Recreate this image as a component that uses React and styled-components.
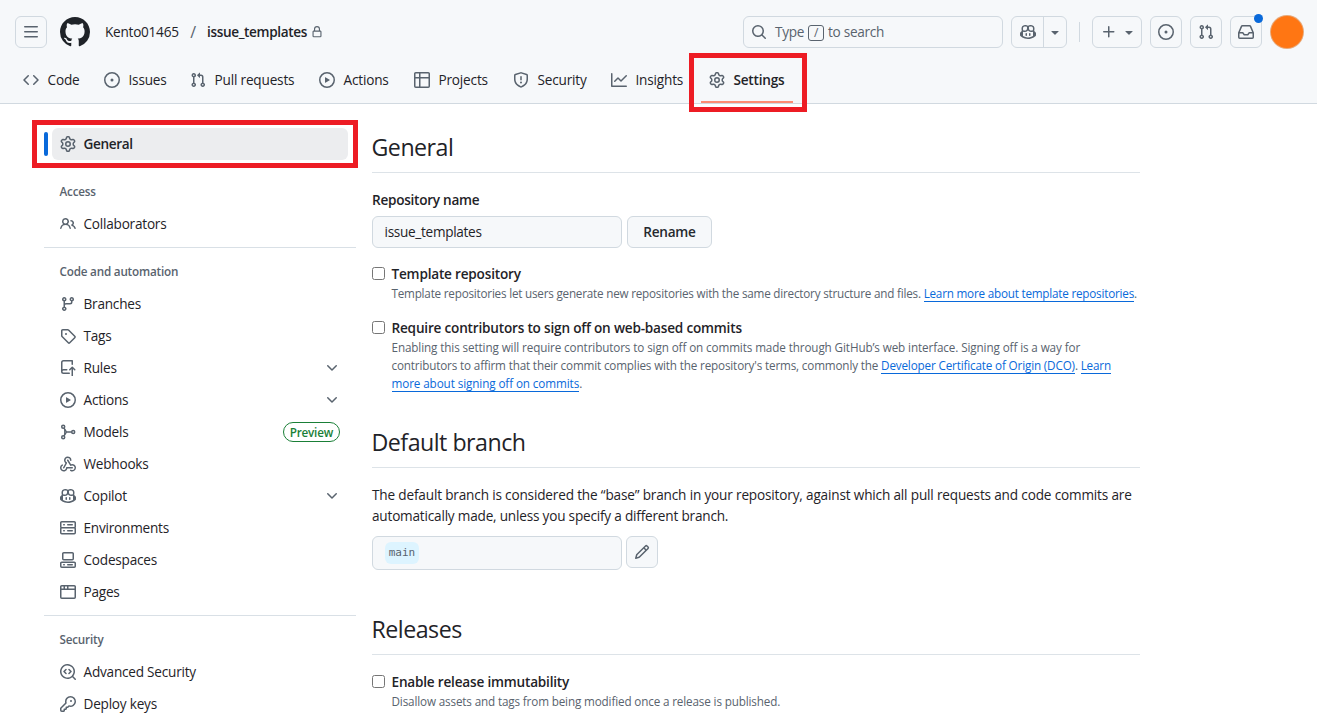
import React from 'react'
import styled, { createGlobalStyle, css } from 'styled-components'

const paths = {
  bars: 'M1 2.75A.75.75 0 0 1 1.75 2h12.5a.75.75 0 0 1 0 1.5H1.75A.75.75 0 0 1 1 2.75Zm0 5A.75.75 0 0 1 1.75 7h12.5a.75.75 0 0 1 0 1.5H1.75A.75.75 0 0 1 1 7.75ZM1.75 12h12.5a.75.75 0 0 1 0 1.5H1.75a.75.75 0 0 1 0-1.5Z',
  github: 'M8 0c4.42 0 8 3.58 8 8a8.013 8.013 0 0 1-5.45 7.59c-.4.08-.55-.17-.55-.38 0-.27.01-1.13.01-2.2 0-.75-.25-1.23-.54-1.48 1.78-.2 3.65-.88 3.65-3.95 0-.88-.31-1.59-.82-2.15.08-.2.36-1.02-.08-2.12 0 0-.67-.22-2.2.82-.64-.18-1.32-.27-2-.27-.68 0-1.36.09-2 .27-1.53-1.03-2.2-.82-2.2-.82-.44 1.1-.16 1.92-.08 2.12-.51.56-.82 1.28-.82 2.15 0 3.06 1.86 3.75 3.64 3.95-.23.2-.44.55-.51 1.07-.46.21-1.61.55-2.33-.66-.15-.24-.6-.83-1.23-.82-.67.01-.27.38.01.53.34.19.73.9.82 1.13.16.45.68 1.31 2.69.94 0 .67.01 1.3.01 1.49 0 .21-.15.45-.55.38A7.995 7.995 0 0 1 0 8c0-4.42 3.58-8 8-8Z',
  lock: 'M4 4a4 4 0 0 1 8 0v2h.25c.966 0 1.75.784 1.75 1.75v5.5A1.75 1.75 0 0 1 12.25 15h-8.5A1.75 1.75 0 0 1 2 13.25v-5.5C2 6.784 2.784 6 3.75 6H4Zm8.25 3.5h-8.5a.25.25 0 0 0-.25.25v5.5c0 .138.112.25.25.25h8.5a.25.25 0 0 0 .25-.25v-5.5a.25.25 0 0 0-.25-.25ZM10.5 6V4a2.5 2.5 0 1 0-5 0v2Z',
  code: 'm11.28 3.22 4.25 4.25a.75.75 0 0 1 0 1.06l-4.25 4.25a.749.749 0 0 1-1.275-.326.749.749 0 0 1 .215-.734L13.94 8l-3.72-3.72a.749.749 0 0 1 .326-1.275.749.749 0 0 1 .734.215Zm-6.56 0a.751.751 0 0 1 1.042.018.751.751 0 0 1 .018 1.042L2.06 8l3.72 3.72a.749.749 0 0 1-.326 1.275.749.749 0 0 1-.734-.215L.47 8.53a.75.75 0 0 1 0-1.06Z',
  issue: 'M8 9.5a1.5 1.5 0 1 0 0-3 1.5 1.5 0 0 0 0 3ZM8 0a8 8 0 1 1 0 16A8 8 0 0 1 8 0ZM1.5 8a6.5 6.5 0 1 0 13 0 6.5 6.5 0 0 0-13 0Z',
  pull: 'M1.5 3.25a2.25 2.25 0 1 1 3 2.122v5.256a2.251 2.251 0 1 1-1.5 0V5.372A2.25 2.25 0 0 1 1.5 3.25Zm5.677-.177L9.573.677A.25.25 0 0 1 10 .854V2.5h1A2.5 2.5 0 0 1 13.5 5v5.628a2.251 2.251 0 1 1-1.5 0V5a1 1 0 0 0-1-1h-1v1.646a.25.25 0 0 1-.427.177L7.177 3.427a.25.25 0 0 1 0-.354ZM3.75 2.5a.75.75 0 1 0 0 1.5.75.75 0 0 0 0-1.5Zm0 9.5a.75.75 0 1 0 0 1.5.75.75 0 0 0 0-1.5Zm8.25.75a.75.75 0 1 0 1.5 0 .75.75 0 0 0-1.5 0Z',
  play: 'M8 0a8 8 0 1 1 0 16A8 8 0 0 1 8 0ZM1.5 8a6.5 6.5 0 1 0 13 0 6.5 6.5 0 0 0-13 0Zm4.879-2.773 4.264 2.559a.25.25 0 0 1 0 .428l-4.264 2.559A.25.25 0 0 1 6 10.559V5.442a.25.25 0 0 1 .379-.215Z',
  table: 'M0 1.75C0 .784.784 0 1.75 0h12.5C15.216 0 16 .784 16 1.75v12.5A1.75 1.75 0 0 1 14.25 16H1.75A1.75 1.75 0 0 1 0 14.25ZM6.5 6.5v8h7.75a.25.25 0 0 0 .25-.25V6.5Zm8-1.5V1.75a.25.25 0 0 0-.25-.25H6.5V5Zm-13 1.5v7.75c0 .138.112.25.25.25H5v-8ZM5 5V1.5H1.75a.25.25 0 0 0-.25.25V5Z',
  shield: 'M7.467.133a1.748 1.748 0 0 1 1.066 0l5.25 1.68A1.75 1.75 0 0 1 15 3.48V7c0 1.566-.32 3.182-1.303 4.682-.983 1.498-2.585 2.813-5.032 3.855a1.697 1.697 0 0 1-1.33 0c-2.447-1.042-4.049-2.357-5.032-3.855C1.32 10.182 1 8.566 1 7V3.48a1.755 1.755 0 0 1 1.217-1.667Zm.61 1.429a.25.25 0 0 0-.153 0l-5.25 1.68a.25.25 0 0 0-.174.238V7c0 1.358.275 2.666 1.057 3.86.784 1.194 2.121 2.34 4.366 3.297a.196.196 0 0 0 .154 0c2.245-.956 3.582-2.104 4.366-3.298C13.225 9.666 13.5 8.36 13.5 7V3.48a.251.251 0 0 0-.174-.237l-5.25-1.68ZM8.75 4.75v3a.75.75 0 0 1-1.5 0v-3a.75.75 0 0 1 1.5 0ZM9 10.5a1 1 0 1 1-2 0 1 1 0 0 1 2 0Z',
  graph: 'M1.5 1.75V13.5h13.75a.75.75 0 0 1 0 1.5H.75a.75.75 0 0 1-.75-.75V1.75a.75.75 0 0 1 1.5 0Zm14.28 2.53-5.25 5.25a.75.75 0 0 1-1.06 0L7 7.06 4.28 9.78a.751.751 0 0 1-1.042-.018.751.751 0 0 1-.018-1.042l3.25-3.25a.75.75 0 0 1 1.06 0L10 7.94l4.72-4.72a.751.751 0 0 1 1.042.018.751.751 0 0 1 .018 1.042Z',
  gear: 'M8 0a8.2 8.2 0 0 1 .701.031C9.444.095 9.99.645 10.16 1.29l.288 1.107c.018.066.079.158.212.224.231.114.454.243.668.386.123.082.233.09.299.071l1.103-.303c.644-.176 1.392.021 1.82.63.27.385.506.792.704 1.218.315.675.111 1.422-.364 1.891l-.814.806c-.049.048-.098.147-.088.294.016.257.016.515 0 .772-.01.147.038.246.088.294l.814.806c.475.469.679 1.216.364 1.891a7.977 7.977 0 0 1-.704 1.217c-.428.61-1.176.807-1.82.63l-1.102-.302c-.067-.019-.177-.011-.3.071a5.909 5.909 0 0 1-.668.386c-.133.066-.194.158-.211.224l-.29 1.106c-.168.646-.715 1.196-1.458 1.26a8.006 8.006 0 0 1-1.402 0c-.743-.064-1.289-.614-1.458-1.26l-.289-1.106c-.018-.066-.079-.158-.212-.224a5.738 5.738 0 0 1-.668-.386c-.123-.082-.233-.09-.299-.071l-1.103.303c-.644.176-1.392-.021-1.82-.63a8.12 8.12 0 0 1-.704-1.218c-.315-.675-.111-1.422.363-1.891l.815-.806c.05-.048.098-.147.088-.294a6.214 6.214 0 0 1 0-.772c.01-.147-.038-.246-.088-.294l-.815-.806C.635 6.045.431 5.298.746 4.623a7.92 7.92 0 0 1 .704-1.217c.428-.61 1.176-.807 1.82-.63l1.102.302c.067.019.177.011.3-.071.214-.143.437-.272.668-.386.133-.066.194-.158.211-.224l.29-1.106C6.009.645 6.556.095 7.299.03 7.53.01 7.764 0 8 0Zm-.571 1.525c-.036.003-.108.036-.137.146l-.289 1.105c-.147.561-.549.967-.998 1.189-.173.086-.34.183-.5.29-.417.278-.97.423-1.529.27l-1.103-.303c-.109-.03-.175.016-.195.045-.22.312-.412.644-.573.99-.014.031-.021.11.059.19l.815.806c.411.406.562.957.53 1.456a4.709 4.709 0 0 0 0 .582c.032.499-.119 1.05-.53 1.456l-.815.806c-.081.08-.073.159-.059.19.162.346.353.677.573.989.02.03.085.076.195.046l1.102-.303c.56-.153 1.113-.008 1.53.27.161.107.328.204.501.29.447.222.85.629.997 1.189l.289 1.105c.029.109.101.143.137.146a6.6 6.6 0 0 0 1.142 0c.036-.003.108-.036.137-.146l.289-1.105c.147-.561.549-.967.998-1.189.173-.086.34-.183.5-.29.417-.278.97-.423 1.529-.27l1.103.303c.109.029.175-.016.195-.045.22-.313.411-.644.573-.99.014-.031.021-.11-.059-.19l-.815-.806c-.411-.406-.562-.957-.53-1.456a4.709 4.709 0 0 0 0-.582c-.032-.499.119-1.05.53-1.456l.815-.806c.081-.08.073-.159.059-.19a6.464 6.464 0 0 0-.573-.989c-.02-.03-.085-.076-.195-.046l-1.102.303c-.56.153-1.113.008-1.53-.27a4.44 4.44 0 0 0-.501-.29c-.447-.222-.85-.629-.997-1.189l-.289-1.105c-.029-.11-.101-.143-.137-.146a6.6 6.6 0 0 0-1.142 0ZM11 8a3 3 0 1 1-6 0 3 3 0 0 1 6 0ZM9.5 8a1.5 1.5 0 1 0-3.001.001A1.5 1.5 0 0 0 9.5 8Z',
  search: 'M10.68 11.74a6 6 0 0 1-7.922-8.982 6 6 0 0 1 8.982 7.922l3.04 3.04a.749.749 0 0 1-.326 1.275.749.749 0 0 1-.734-.215ZM11.5 7a4.499 4.499 0 1 0-8.997 0A4.499 4.499 0 0 0 11.5 7Z',
  copilot: 'M7.998 15.035c-4.562 0-7.873-2.914-7.998-3.749V9.338c.085-.628.677-1.686 1.588-2.065.013-.07.024-.143.036-.218.029-.183.06-.384.126-.612-.201-.508-.254-1.084-.254-1.656 0-.87.128-1.769.693-2.484.579-.733 1.494-1.124 2.724-1.261 1.206-.134 2.262.034 2.944.765.05.053.096.108.139.165.044-.057.094-.112.143-.165.682-.731 1.738-.899 2.944-.765 1.23.137 2.145.528 2.724 1.261.566.715.693 1.614.693 2.484 0 .572-.053 1.148-.254 1.656.066.228.098.429.126.612.012.076.024.148.037.218.924.385 1.522 1.471 1.591 2.095v1.872c0 .766-3.351 3.795-8.002 3.795Zm0-1.485c2.28 0 4.584-1.11 5.002-1.433V7.862l-.023-.116c-.49.21-1.075.291-1.727.291-1.146 0-2.059-.327-2.71-.991A3.222 3.222 0 0 1 8 6.303a3.24 3.24 0 0 1-.544.743c-.65.664-1.563.991-2.71.991-.652 0-1.236-.081-1.727-.291l-.023.116v4.255c.419.323 2.722 1.433 5.002 1.433ZM6.762 2.83c-.193-.206-.637-.413-1.682-.297-1.019.113-1.479.404-1.713.7-.247.312-.369.789-.369 1.554 0 .793.129 1.171.308 1.371.162.181.519.379 1.442.379.853 0 1.339-.235 1.638-.54.315-.322.527-.827.617-1.553.117-.935-.037-1.395-.241-1.614Zm4.155-.297c-1.044-.116-1.488.091-1.681.297-.204.219-.359.679-.242 1.614.091.726.303 1.231.618 1.553.299.305.784.54 1.638.54.922 0 1.28-.198 1.442-.379.179-.2.308-.578.308-1.371 0-.765-.123-1.242-.37-1.554-.233-.296-.693-.587-1.713-.7ZM6.25 9.037a.75.75 0 0 1 .75.75v1.501a.75.75 0 0 1-1.5 0V9.787a.75.75 0 0 1 .75-.75Zm4.25.75v1.501a.75.75 0 0 1-1.5 0V9.787a.75.75 0 0 1 1.5 0Z',
  triangle: 'm4.427 7.427 3.396 3.396a.25.25 0 0 0 .354 0l3.396-3.396A.25.25 0 0 0 11.396 7H4.604a.25.25 0 0 0-.177.427Z',
  plus: 'M7.75 2a.75.75 0 0 1 .75.75V7h4.25a.75.75 0 0 1 0 1.5H8.5v4.25a.75.75 0 0 1-1.5 0V8.5H2.75a.75.75 0 0 1 0-1.5H7V2.75A.75.75 0 0 1 7.75 2Z',
  inbox: 'M2.8 2.06A1.75 1.75 0 0 1 4.41 1h7.18c.7 0 1.333.417 1.61 1.06l2.74 6.395c.04.093.06.194.06.295v4.5A1.75 1.75 0 0 1 14.25 15H1.75A1.75 1.75 0 0 1 0 13.25v-4.5c0-.101.02-.202.06-.295Zm1.61.44a.25.25 0 0 0-.23.152L1.887 8H4.75a.75.75 0 0 1 .6.3L6.625 10h2.75l1.275-1.7a.75.75 0 0 1 .6-.3h2.863L11.82 2.652a.25.25 0 0 0-.23-.152Zm10.09 7h-2.875l-1.275 1.7a.75.75 0 0 1-.6.3h-3.5a.75.75 0 0 1-.6-.3L4.375 9.5H1.5v3.75c0 .138.112.25.25.25h12.5a.25.25 0 0 0 .25-.25Z',
  people: 'M2 5.5a3.5 3.5 0 1 1 5.898 2.549 5.508 5.508 0 0 1 3.034 4.084.75.75 0 1 1-1.482.235 4 4 0 0 0-7.9 0 .75.75 0 0 1-1.482-.236A5.507 5.507 0 0 1 3.102 8.05 3.493 3.493 0 0 1 2 5.5ZM11 4a3.001 3.001 0 0 1 2.22 5.018 5.01 5.01 0 0 1 2.56 3.012.749.749 0 0 1-.885.954.752.752 0 0 1-.549-.514 3.507 3.507 0 0 0-2.522-2.372.75.75 0 0 1-.574-.73v-.352a.75.75 0 0 1 .416-.672A1.5 1.5 0 0 0 11 5.5.75.75 0 0 1 11 4Zm-5.5-.5a2 2 0 1 0-.001 3.999A2 2 0 0 0 5.5 3.5Z',
  branch: 'M9.5 3.25a2.25 2.25 0 1 1 3 2.122V6A2.5 2.5 0 0 1 10 8.5H6a1 1 0 0 0-1 1v1.128a2.251 2.251 0 1 1-1.5 0V5.372a2.25 2.25 0 1 1 1.5 0v1.836A2.493 2.493 0 0 1 6 7h4a1 1 0 0 0 1-1v-.628A2.25 2.25 0 0 1 9.5 3.25Zm-6 0a.75.75 0 1 0 1.5 0 .75.75 0 0 0-1.5 0Zm8.25-.75a.75.75 0 1 0 0 1.5.75.75 0 0 0 0-1.5ZM4.25 12a.75.75 0 1 0 0 1.5.75.75 0 0 0 0-1.5Z',
  tag: 'M1 7.775V2.75C1 1.784 1.784 1 2.75 1h5.025c.464 0 .91.184 1.238.513l6.25 6.25a1.75 1.75 0 0 1 0 2.474l-5.026 5.026a1.75 1.75 0 0 1-2.474 0l-6.25-6.25A1.752 1.752 0 0 1 1 7.775Zm1.5 0c0 .066.026.13.073.177l6.25 6.25a.25.25 0 0 0 .354 0l5.025-5.025a.25.25 0 0 0 0-.354l-6.25-6.25a.25.25 0 0 0-.177-.073H2.75a.25.25 0 0 0-.25.25ZM6 5a1 1 0 1 1 0 2 1 1 0 0 1 0-2Z',
  push: 'M1 2.5A2.5 2.5 0 0 1 3.5 0h8.75a.75.75 0 0 1 .75.75v3.5a.75.75 0 0 1-1.5 0V1.5h-8a1 1 0 0 0-1 1v6.708A2.493 2.493 0 0 1 3.5 9h3.25a.75.75 0 0 1 0 1.5H3.5a1 1 0 0 0 0 2h5.75a.75.75 0 0 1 0 1.5H3.5A2.5 2.5 0 0 1 1 11.5Zm13.23 7.79-1.225-1.225v7.185a.75.75 0 0 1-1.5 0V9.066L10.28 10.29a.75.75 0 0 1-1.06-1.061l2.505-2.504a.75.75 0 0 1 1.06 0L15.29 9.23a.751.751 0 0 1-.018 1.042.751.751 0 0 1-1.042.018Z',
  webhook: 'M5.5 4.25a2.25 2.25 0 0 1 4.5 0 .75.75 0 0 0 1.5 0 3.75 3.75 0 1 0-6.14 2.889l-2.272 4.258a.75.75 0 0 0 1.324.706L7 7.25a.75.75 0 0 0-.309-1.015A2.25 2.25 0 0 1 5.5 4.25ZM7.364 3.607a.75.75 0 0 1 1.03.257l2.608 4.349a3.75 3.75 0 1 1-.628 6.785.75.75 0 0 1 .752-1.299 2.25 2.25 0 1 0-.033-3.88.75.75 0 0 1-1.03-.256L7.107 4.636a.75.75 0 0 1 .257-1.03ZM2.9 8.776A.75.75 0 0 1 2.625 9.8 2.25 2.25 0 1 0 6 11.75a.75.75 0 0 1 .75-.751h5.5a.75.75 0 0 1 0 1.5H7.425a3.751 3.751 0 1 1-5.55-3.998.75.75 0 0 1 1.024.274Z',
  server: 'M1.75 1h12.5c.966 0 1.75.784 1.75 1.75v4c0 .372-.116.717-.314 1 .198.283.314.628.314 1v4a1.75 1.75 0 0 1-1.75 1.75H1.75A1.75 1.75 0 0 1 0 12.75v-4c0-.358.109-.707.314-1a1.739 1.739 0 0 1-.314-1v-4C0 1.784.784 1 1.75 1ZM1.5 2.75v4c0 .138.112.25.25.25h12.5a.25.25 0 0 0 .25-.25v-4a.25.25 0 0 0-.25-.25H1.75a.25.25 0 0 0-.25.25Zm.25 5.75a.25.25 0 0 0-.25.25v4c0 .138.112.25.25.25h12.5a.25.25 0 0 0 .25-.25v-4a.25.25 0 0 0-.25-.25ZM7 4.75A.75.75 0 0 1 7.75 4h4.5a.75.75 0 0 1 0 1.5h-4.5A.75.75 0 0 1 7 4.75ZM7.75 10h4.5a.75.75 0 0 1 0 1.5h-4.5a.75.75 0 0 1 0-1.5ZM3 4.75A.75.75 0 0 1 3.75 4h.5a.75.75 0 0 1 0 1.5h-.5A.75.75 0 0 1 3 4.75ZM3.75 10h.5a.75.75 0 0 1 0 1.5h-.5a.75.75 0 0 1 0-1.5Z',
  codespaces: 'M0 11.25c0-.966.784-1.75 1.75-1.75h12.5c.966 0 1.75.784 1.75 1.75v3A1.75 1.75 0 0 1 14.25 16H1.75A1.75 1.75 0 0 1 0 14.25Zm2-9.5C2 .784 2.784 0 3.75 0h8.5C13.216 0 14 .784 14 1.75v5a1.75 1.75 0 0 1-1.75 1.75h-8.5A1.75 1.75 0 0 1 2 6.75Zm1.75-.25a.25.25 0 0 0-.25.25v5c0 .138.112.25.25.25h8.5a.25.25 0 0 0 .25-.25v-5a.25.25 0 0 0-.25-.25Zm-2 9.5a.25.25 0 0 0-.25.25v3c0 .138.112.25.25.25h12.5a.25.25 0 0 0 .25-.25v-3a.25.25 0 0 0-.25-.25ZM7 12.75a.75.75 0 0 1 .75-.75h4.5a.75.75 0 0 1 0 1.5h-4.5a.75.75 0 0 1-.75-.75Zm-4 0a.75.75 0 0 1 .75-.75h.5a.75.75 0 0 1 0 1.5h-.5a.75.75 0 0 1-.75-.75Z',
  browser: 'M0 2.75C0 1.784.784 1 1.75 1h12.5c.966 0 1.75.784 1.75 1.75v10.5A1.75 1.75 0 0 1 14.25 15H1.75A1.75 1.75 0 0 1 0 13.25ZM14.5 6h-13v7.25c0 .138.112.25.25.25h12.5a.25.25 0 0 0 .25-.25Zm-6-3.5v2h6V2.75a.25.25 0 0 0-.25-.25ZM5 2.5v2h2v-2Zm-3.25 0a.25.25 0 0 0-.25.25V4.5h2v-2Z',
  codescan: 'M8.47 4.97a.75.75 0 0 0 0 1.06L9.94 7.5 8.47 8.97a.75.75 0 1 0 1.06 1.06l2-2a.75.75 0 0 0 0-1.06l-2-2a.75.75 0 0 0-1.06 0ZM6.53 6.03a.75.75 0 0 0-1.06-1.06l-2 2a.75.75 0 0 0 0 1.06l2 2a.75.75 0 1 0 1.06-1.06L5.06 7.5l1.47-1.47ZM12.246 13.307a7.501 7.501 0 1 1 1.06-1.06l2.474 2.473a.749.749 0 0 1-.326 1.275.749.749 0 0 1-.734-.215ZM1.5 7.5a6.002 6.002 0 0 0 3.608 5.504 6.002 6.002 0 0 0 6.486-1.117.748.748 0 0 1 .292-.293A6 6 0 1 0 1.5 7.5Z',
  key: 'M10.5 0a5.499 5.499 0 1 1-1.288 10.848l-.932.932a.749.749 0 0 1-.53.22H7v.75a.749.749 0 0 1-.22.53l-.5.5a.749.749 0 0 1-.53.22H5v.75a.749.749 0 0 1-.22.53l-.5.5a.749.749 0 0 1-.53.22h-2A1.75 1.75 0 0 1 0 14.25v-2c0-.199.079-.389.22-.53l4.932-4.932A5.5 5.5 0 0 1 10.5 0Zm-4 5.5c-.001.431.069.86.205 1.269a.75.75 0 0 1-.181.768L1.5 12.56v1.69c0 .138.112.25.25.25h1.69l.06-.06v-1.19a.75.75 0 0 1 .75-.75h1.19l.06-.06v-1.19a.75.75 0 0 1 .75-.75h1.19l1.023-1.025a.75.75 0 0 1 .768-.18A4 4 0 1 0 6.5 5.5ZM11 6a1 1 0 1 1 0-2 1 1 0 0 1 0 2Z',
  pencil: 'M11.013 1.427a1.75 1.75 0 0 1 2.474 0l1.086 1.086a1.75 1.75 0 0 1 0 2.474l-8.61 8.61c-.21.21-.47.364-.756.445l-3.251.93a.75.75 0 0 1-.927-.928l.929-3.25c.081-.286.235-.547.445-.758l8.61-8.61Zm.176 4.823L9.75 4.81l-6.286 6.287a.253.253 0 0 0-.064.108l-.558 1.953 1.953-.558a.253.253 0 0 0 .108-.064Zm1.238-3.763a.25.25 0 0 0-.354 0L10.811 3.75l1.439 1.44 1.263-1.263a.25.25 0 0 0 0-.354Z',
  chevron: 'M12.78 5.22a.749.749 0 0 1 0 1.06l-4.25 4.25a.749.749 0 0 1-1.06 0L3.22 6.28a.749.749 0 1 1 1.06-1.06L8 8.939l3.72-3.719a.749.749 0 0 1 1.06 0Z',
}

function Icon({ name, size = 16 }) {
  if (name === 'models') {
    return (
      <Svg viewBox="0 0 16 16" $size={size}>
        <g fill="none" stroke="currentColor" strokeWidth="1.5">
          <circle cx="3.2" cy="2.8" r="1.5" />
          <circle cx="3.2" cy="13.2" r="1.5" />
          <circle cx="13.2" cy="8" r="1.5" />
          <path d="M4 4.2 6.4 8 4 11.8M6.4 8h5.3" />
          <path d="M4.6 5v6" strokeWidth="1" />
        </g>
      </Svg>
    )
  }
  return (
    <Svg viewBox="0 0 16 16" $size={size}>
      <path d={paths[name]} />
    </Svg>
  )
}

const tabs = [
  { icon: 'code', label: 'Code', width: 81 },
  { icon: 'issue', label: 'Issues', width: 86 },
  { icon: 'pull', label: 'Pull requests', width: 129 },
  { icon: 'play', label: 'Actions', width: 95 },
  { icon: 'table', label: 'Projects', width: 99 },
  { icon: 'shield', label: 'Security', width: 98 },
  { icon: 'graph', label: 'Insights', width: 98 },
  { icon: 'gear', label: 'Settings', width: 92, active: true },
]

const groups = [
  { title: 'Access', items: [{ icon: 'people', label: 'Collaborators' }] },
  {
    title: 'Code and automation',
    items: [
      { icon: 'branch', label: 'Branches' },
      { icon: 'tag', label: 'Tags' },
      { icon: 'push', label: 'Rules', more: true },
      { icon: 'play', label: 'Actions', more: true },
      { icon: 'models', label: 'Models', badge: 'Preview' },
      { icon: 'webhook', label: 'Webhooks' },
      { icon: 'copilot', label: 'Copilot', more: true },
      { icon: 'server', label: 'Environments' },
      { icon: 'codespaces', label: 'Codespaces' },
      { icon: 'browser', label: 'Pages' },
    ],
  },
  {
    title: 'Security',
    items: [
      { icon: 'codescan', label: 'Advanced Security' },
      { icon: 'key', label: 'Deploy keys' },
    ],
  },
]

function NavItem({ icon, label, more, badge }) {
  return (
    <Item>
      <Icon name={icon} />
      <ItemText>{label}</ItemText>
      {more && <Icon name="chevron" />}
      {badge && <Badge>{badge}</Badge>}
    </Item>
  )
}

function Option({ label, top, children }) {
  return (
    <OptionRow $top={top}>
      <Check type="checkbox" />
      <div>
        <OptionLabel>{label}</OptionLabel>
        <Note>{children}</Note>
      </div>
    </OptionRow>
  )
}

function App() {
  return (
    <Page>
      <GlobalStyle />
      <Header>
        <TopBar>
          <SquareButton><Icon name="bars" /></SquareButton>
          <Logo><Icon name="github" size={30} /></Logo>
          <Owner>Kento01465</Owner>
          <Slash>/</Slash>
          <Repo>issue_templates</Repo>
          <Icon name="lock" size={12} />
          <Actions>
            <SearchBox>
              <Icon name="search" />
              <span>Type</span>
              <Kbd>/</Kbd>
              <span>to search</span>
            </SearchBox>
            <CopilotGroup>
              <CopilotMain><Icon name="copilot" /></CopilotMain>
              <CopilotMore><Icon name="triangle" /></CopilotMore>
            </CopilotGroup>
            <Separator />
            <NewButton>
              <Icon name="plus" />
              <Icon name="triangle" />
            </NewButton>
            <SquareButton><Icon name="issue" /></SquareButton>
            <SquareButton><Icon name="pull" /></SquareButton>
            <SquareButton>
              <Icon name="inbox" />
              <Dot />
            </SquareButton>
            <Avatar />
          </Actions>
        </TopBar>
        <Tabs>
          {tabs.map(t => (
            <Tab key={t.label} $width={t.width} $active={t.active}>
              <Icon name={t.icon} />
              <span>{t.label}</span>
              {t.active && <TabMark />}
            </Tab>
          ))}
        </Tabs>
      </Header>

      <Body>
        <Sidebar>
          <Current>
            <Item $active>
              <Icon name="gear" />
              <ItemText>General</ItemText>
            </Item>
            <NavMark />
          </Current>
          {groups.map((g, i) => (
            <Group key={g.title} $first={i === 0}>
              <GroupTitle>{g.title}</GroupTitle>
              {g.items.map(item => <NavItem key={item.label} {...item} />)}
            </Group>
          ))}
        </Sidebar>

        <Main>
          <Title>General</Title>
          <FieldLabel>Repository name</FieldLabel>
          <FieldRow>
            <Input defaultValue="issue_templates" />
            <RenameButton>Rename</RenameButton>
          </FieldRow>
          <Option label="Template repository">
            <Line $track={-0.212}>
              Template repositories let users generate new repositories with the same directory structure and files. <Link href="#">Learn more about template repositories</Link>.
            </Line>
          </Option>
          <Option label="Require contributors to sign off on web-based commits">
            <Line $track={-0.112}>
              Enabling this setting will require contributors to sign off on commits made through GitHub’s web interface. Signing off is a way for
            </Line>
            <Line $track={-0.158}>
              contributors to affirm that their commit complies with the repository's terms, commonly the <Link href="#">Developer Certificate of Origin (DCO)</Link>. <Link href="#">Learn</Link>
            </Line>
            <Line $track={-0.1}>
              <Link href="#">more about signing off on commits</Link>.
            </Line>
          </Option>

          <Title $top={34}>Default branch</Title>
          <Paragraph>
            <Line $track={-0.168}>
              The default branch is considered the “base” branch in your repository, against which all pull requests and code commits are
            </Line>
            <Line $track={-0.2}>
              automatically made, unless you specify a different branch.
            </Line>
          </Paragraph>
          <BranchRow>
            <BranchBox><BranchName>main</BranchName></BranchBox>
            <EditButton><Icon name="pencil" /></EditButton>
          </BranchRow>

          <Title $top={44}>Releases</Title>
          <Option label="Enable release immutability" top={17}>
            <Line $track={-0.145}>
              Disallow assets and tags from being modified once a release is published.
            </Line>
          </Option>
        </Main>
      </Body>
    </Page>
  )
}

export default App

const GlobalStyle = createGlobalStyle`
* {
  box-sizing: border-box;
}
body {
  margin: 0;
  overflow: hidden;
  background: #fff;
  color: #1f2328;
  font-family: "Open Sans", "Noto Sans", sans-serif;
  font-size: 13.6px;
  letter-spacing: -0.2px;
  line-height: 20px;
}
`
const Svg = styled.svg`
  display: block;
  flex: none;
  width: ${props => props.$size}px;
  height: ${props => props.$size}px;
  fill: currentColor;
`
const Page = styled.div`
  height: 726px;
  overflow: hidden;
  white-space: nowrap;
`
const Header = styled.header`
  height: 104px;
  background: #f6f8fa;
  border-bottom: 1px solid #d1d9e0;
`
const TopBar = styled.div`
  display: flex;
  align-items: center;
  height: 64px;
  padding: 0 14px 0 15px;
  color: #59636e;
`
const boxed = css`
  display: flex;
  align-items: center;
  height: 32px;
  border: 1px solid #d1d9e0;
  border-radius: 6px;
  color: #59636e;
`
const SquareButton = styled.div`
  ${boxed}
  position: relative;
  justify-content: center;
  width: 32px;
`
const Logo = styled.div`
  margin-left: 13px;
  color: #1f2328;
`
const Owner = styled.span`
  width: 74px;
  margin-left: 15px;
  color: #1f2328;
  letter-spacing: -0.25px;
`
const Slash = styled.span`
  width: 28px;
  font-size: 16px;
  text-align: center;
`
const Repo = styled.span`
  width: 104px;
  color: #1f2328;
  font-weight: 600;
  letter-spacing: -0.36px;
`
const Actions = styled.div`
  display: flex;
  align-items: center;
  gap: 8px;
  margin-left: auto;
`
const SearchBox = styled.div`
  ${boxed}
  width: 260px;
  padding-left: 7px;
  letter-spacing: -0.3px;

  svg {
    margin-right: 8px;
  }
`
const Kbd = styled.span`
  width: 16px;
  height: 16px;
  margin: 1px 4px 0;
  border: 1px solid #59636e;
  border-radius: 3px;
  font-size: 12px;
  line-height: 13px;
  text-align: center;
`
const CopilotGroup = styled.div`
  ${boxed}
  width: 56px;
`
const CopilotMain = styled.div`
  display: flex;
  align-items: center;
  justify-content: center;
  width: 32px;
  height: 30px;
  border-right: 1px solid #d1d9e0;
`
const CopilotMore = styled.div`
  padding-left: 3px;
`
const Separator = styled.div`
  width: 1px;
  height: 20px;
  margin: 0 4px;
  background: #d1d9e0;
`
const NewButton = styled.div`
  ${boxed}
  gap: 4px;
  width: 50px;
  padding-left: 8px;
`
const Dot = styled.div`
  position: absolute;
  top: -3px;
  right: -2px;
  width: 9px;
  height: 9px;
  border-radius: 50%;
  background: #0969da;
`
const Avatar = styled.div`
  width: 32px;
  height: 32px;
  margin-left: 1px;
  border-radius: 50%;
  background: #ff7613;
  box-shadow: 0 0 0 1px #e8a878;
`
const Tabs = styled.nav`
  display: flex;
  padding-left: 15px;
`
const Tab = styled.div`
  position: relative;
  display: flex;
  align-items: center;
  gap: 8.5px;
  width: ${props => props.$width}px;
  height: 39px;
  padding: 0 0 7px 8px;
  font-weight: ${props => (props.$active ? 600 : 400)};
  letter-spacing: ${props => (props.$active ? -0.22 : -0.18)}px;
  box-shadow: ${props => (props.$active ? 'inset 0 -2px #fd8c73' : 'none')};

  svg {
    color: #59636e;
  }
`
const mark = css`
  position: absolute;
  border: 5px solid #ed1c24;
`
const TabMark = styled.div`
  ${mark}
  top: -11px;
  left: -12px;
  width: 118px;
  height: 59px;
`
const Body = styled.div`
  display: flex;
  padding-left: 44px;
`
const Sidebar = styled.aside`
  width: 312px;
  padding-top: 24px;
`
const Current = styled.div`
  position: relative;

  &::before {
    content: '';
    position: absolute;
    top: 4px;
    left: 0;
    width: 4px;
    height: 24px;
    border-radius: 6px;
    background: #0969da;
  }
`
const NavMark = styled.div`
  ${mark}
  top: -8px;
  left: -12px;
  width: 326px;
  height: 48px;
`
const Item = styled.div`
  display: flex;
  align-items: center;
  gap: 7.5px;
  height: 32px;
  margin: 0 8px;
  padding: 0 8px;
  border-radius: 6px;
  background: ${props => (props.$active ? '#ecedef' : 'transparent')};
  font-weight: ${props => (props.$active ? 600 : 400)};
  letter-spacing: ${props => (props.$active ? -0.38 : -0.22)}px;

  svg {
    color: #59636e;
  }
`
const ItemText = styled.span`
  flex: 1;
`
const Badge = styled.span`
  height: 20px;
  padding: 0 6px;
  border: 1px solid #1a7f37;
  border-radius: 10px;
  color: #1a7f37;
  font-size: 11.7px;
  font-weight: 600;
  line-height: 19px;
`
const Group = styled.div`
  margin-top: ${props => (props.$first ? 16 : 7)}px;
  padding-top: ${props => (props.$first ? 0 : 8)}px;
  border-top: ${props => (props.$first ? 'none' : '1px solid #d9e0e6')};
`
const GroupTitle = styled.div`
  height: 32px;
  padding-left: 15.5px;
  color: #59636e;
  font-size: 11.7px;
  font-weight: 600;
  line-height: 30px;
`
const Main = styled.main`
  width: 768px;
  margin-left: 16px;
  padding-top: 28px;
`
const Title = styled.h2`
  height: 41px;
  margin: ${props => props.$top || 0}px 0 0;
  border-bottom: 1px solid #dde3e8;
  font-size: 23.2px;
  font-weight: 400;
  letter-spacing: -0.5px;
  line-height: 30px;
  text-indent: -0.5px;
`
const FieldLabel = styled.div`
  height: 26px;
  margin-top: 17px;
  font-weight: 600;
  letter-spacing: -0.27px;
`
const FieldRow = styled.div`
  display: flex;
  gap: 5px;
  margin-bottom: 16px;
`
const Input = styled.input`
  width: 250px;
  height: 32px;
  padding: 0 11.5px 1px;
  border: 1px solid #d1d9e0;
  border-radius: 6px;
  background: #f6f8fa;
  color: #1f2328;
  font: inherit;
  letter-spacing: -0.3px;
`
const RenameButton = styled.button`
  width: 85px;
  height: 32px;
  padding: 0;
  border: 1px solid #d1d9e0;
  border-radius: 6px;
  background: #f6f8fa;
  color: #25292e;
  font: inherit;
  font-weight: 600;
  letter-spacing: -0.25px;
`
const OptionRow = styled.div`
  display: flex;
  margin-top: ${props => props.$top || 15}px;
`
const Check = styled.input`
  width: 13px;
  height: 13px;
  margin: 3px 6.5px 0 0;
`
const OptionLabel = styled.div`
  height: 20px;
  line-height: 19px;
  font-weight: 600;
  letter-spacing: -0.2px;
`
const Note = styled.div`
  margin-bottom: 1px;
  color: #59636e;
  font-size: 11.7px;
  line-height: 18px;
`
const Line = styled.span`
  display: block;
  letter-spacing: ${props => props.$track}px;
`
const Link = styled.a`
  border-bottom: 1px solid #0969da;
  color: #0969da;
  text-decoration: none;
`
const Paragraph = styled.p`
  margin: 16px 0 10px;
  line-height: 21px;
`
const BranchRow = styled.div`
  display: flex;
  gap: 4px;
`
const BranchBox = styled.div`
  width: 250px;
  height: 34px;
  padding: 5px 12px;
  border: 1px solid #d1d9e0;
  border-radius: 6px;
  background: #f6f8fa;
`
const BranchName = styled.span`
  display: block;
  width: 34px;
  height: 22px;
  border-radius: 6px;
  background: #ddf4ff;
  color: #59636e;
  font: 11px/21px "DejaVu Sans Mono", monospace;
  letter-spacing: 0;
  text-align: center;
`
const EditButton = styled.div`
  ${boxed}
  justify-content: center;
  width: 32px;
  background: #f6f8fa;
`
